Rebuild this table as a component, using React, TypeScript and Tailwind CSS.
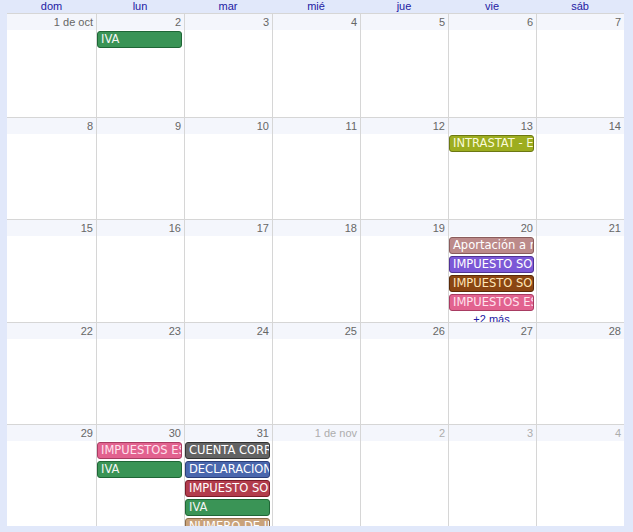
import React from "react";

type Ev = { t: string; bg: string; bd: string; fg: string };

const G = { bg: "#3a9456", bd: "#1f6636", fg: "#f4f4f4" };

const ev = (t: string, c: { bg: string; bd: string; fg: string }): Ev => ({ t, ...c });

type Cell = { n: string; other?: boolean; evs?: Ev[]; more?: string };

const rows: { h: string; cells: Cell[] }[] = [
  {
    h: "h-[104px]",
    cells: [
      { n: "1 de oct" },
      { n: "2", evs: [ev("IVA", G)] },
      { n: "3" },
      { n: "4" },
      { n: "5" },
      { n: "6" },
      { n: "7" },
    ],
  },
  {
    h: "h-[102px]",
    cells: [
      { n: "8" },
      { n: "9" },
      { n: "10" },
      { n: "11" },
      { n: "12" },
      { n: "13", evs: [ev("INTRASTAT - Enero", { bg: "#9dad1f", bd: "#6c7812", fg: "#fafad8" })] },
      { n: "14" },
    ],
  },
  {
    h: "h-[103px]",
    cells: [
      { n: "15" },
      { n: "16" },
      { n: "17" },
      { n: "18" },
      { n: "19" },
      {
        n: "20",
        evs: [
          ev("Aportación a reservas", { bg: "#bc8a8a", bd: "#8a5c5c", fg: "#ffffff" }),
          ev("IMPUESTO SOBRE", { bg: "#7b58d6", bd: "#4f3296", fg: "#ffffff" }),
          ev("IMPUESTO SOBRE", { bg: "#8a4512", bd: "#5a2a08", fg: "#ffe6b8" }),
          ev("IMPUESTOS ESPECIALES", { bg: "#e2628f", bd: "#a83c62", fg: "#ffe2ee" }),
        ],
        more: "+2 más",
      },
      { n: "21" },
    ],
  },
  {
    h: "h-[102px]",
    cells: [
      { n: "22" },
      { n: "23" },
      { n: "24" },
      { n: "25" },
      { n: "26" },
      { n: "27" },
      { n: "28" },
    ],
  },
  {
    h: "h-[102px]",
    cells: [
      { n: "29" },
      {
        n: "30",
        evs: [
          ev("IMPUESTOS ESPECIALES", { bg: "#e2628f", bd: "#a83c62", fg: "#ffe2ee" }),
          ev("IVA", G),
        ],
      },
      {
        n: "31",
        evs: [
          ev("CUENTA CORRIENTE", { bg: "#636363", bd: "#333333", fg: "#ffffff" }),
          ev("DECLARACION", { bg: "#4a67ad", bd: "#2a3e78", fg: "#ffffff" }),
          ev("IMPUESTO SOBRE", { bg: "#b23c4c", bd: "#7a1c2a", fg: "#ffffff" }),
          ev("IVA", G),
          ev("NÚMERO DE IDENTIFICACIÓN", { bg: "#c9a27a", bd: "#8e6c48", fg: "#ffffff" }),
        ],
      },
      { n: "1 de nov", other: true },
      { n: "2", other: true },
      { n: "3", other: true },
      { n: "4", other: true },
    ],
  },
];

const days = ["dom", "lun", "mar", "mié", "jue", "vie", "sáb"];

export default function App() {
  return (
    <div
      className="w-[633px] h-[532px] bg-[#e1e8fa] overflow-hidden pl-[7px] pr-[9px]"
      style={{ fontFamily: '"Liberation Sans", Arial, sans-serif' }}
    >
      <div className="grid grid-cols-[89px_88px_88px_88px_88px_88px_88px] h-[13px]">
        {days.map((d) => (
          <div key={d} className="text-center text-[11px] leading-[13px] text-[#2320a3]">
            {d}
          </div>
        ))}
      </div>
      <div className="bg-white">
        {rows.map((r, ri) => (
          <div
            key={ri}
            className={`grid grid-cols-[89px_88px_88px_88px_88px_88px_88px] border-t border-[#d6d6d6] ${r.h}`}
          >
            {r.cells.map((c, ci) => (
              <div
                key={ci}
                className={`flex flex-col overflow-hidden ${ci > 0 ? "border-l border-[#d6d6d6]" : ""}`}
              >
                <div
                  className={`h-[16px] shrink-0 bg-[#f4f6fc] text-right pr-[3px] text-[11px] leading-[16px] ${
                    c.other ? "text-[#adadad]" : "text-[#666666]"
                  }`}
                >
                  {c.n}
                </div>
                <div className="flex flex-col gap-[2px] pt-[1px] pr-[2px]">
                  {c.evs?.map((e, ei) => (
                    <div
                      key={ei}
                      className="h-[17px] shrink-0 rounded-[3px] border overflow-hidden whitespace-nowrap pl-[3px] text-[11.5px] leading-[15px]"
                      style={{
                        backgroundColor: e.bg,
                        borderColor: e.bd,
                        color: e.fg,
                        fontFamily: '"DejaVu Sans", Verdana, sans-serif',
                      }}
                    >
                      {e.t}
                    </div>
                  ))}
                  {c.more && (
                    <div className="text-center text-[11px] leading-[12px] text-[#2320a3]">
                      {c.more}
                    </div>
                  )}
                </div>
              </div>
            ))}
          </div>
        ))}
      </div>
    </div>
  );
}
